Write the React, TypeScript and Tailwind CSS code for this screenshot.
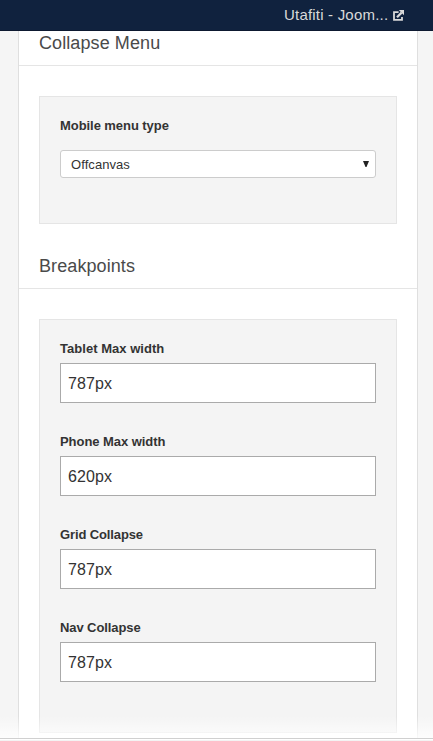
import React from "react";

const fields = [
  { label: "Tablet Max width", value: "787px", tracking: "tracking-[0.03px]" },
  { label: "Phone Max width", value: "620px", tracking: "tracking-[-0.05px]" },
  { label: "Grid Collapse", value: "787px", tracking: "tracking-[-0.12px]" },
  { label: "Nav Collapse", value: "787px", tracking: "tracking-[-0.09px]" },
];

function ExternalIcon() {
  return (
    <svg className="mt-px h-[11px] w-[11px] shrink-0" viewBox="0 0 11 11" fill="none" stroke="#d9d9d9">
      <path d="M5.6 2.2H1v7.6h8V7" strokeWidth="1.8" />
      <path d="M4 7.2 8.6 2.6" strokeWidth="2.2" />
      <path d="M5.8 0H11v5.2Z" fill="#d9d9d9" stroke="none" />
    </svg>
  );
}

function Heading({ children }: { children: React.ReactNode }) {
  return (
    <h2 className="h-[46px] border-b border-[#e5e5e5] pl-5 pt-[11px] text-[18px] leading-[24px] tracking-[0.09px] text-[#4a4a4a]">
      {children}
    </h2>
  );
}

export default function App() {
  return (
    <div className="relative flex h-[741px] w-[433px] flex-col overflow-hidden bg-[#f5f5f5] font-['Liberation_Sans',Arial,sans-serif] text-[#333]">
      <header className="flex h-[31px] shrink-0 items-center gap-[5px] border-b border-[#0d1930] bg-[#10223e] pl-[284px] text-[15px] tracking-[0.2px] text-[#d9d9d9]">
        <span className="whitespace-nowrap">Utafiti - Joom...</span>
        <ExternalIcon />
      </header>
      <main className="mx-[18px] h-[707px] w-[400px] shrink-0 border-x border-[#dfdfdf] bg-white">
        <div className="-mt-[11px] [clip-path:inset(11px_0_0_0)]">
          <Heading>Collapse Menu</Heading>
        </div>
        <section className="mx-5 mt-[30px] h-[128px] border border-[#e5e5e5] bg-[#f4f4f4] px-5 pt-5">
          <div className="text-[13px] font-bold leading-[18px] tracking-[-0.06px]">Mobile menu type</div>
          <div className="mt-[15px] flex h-7 items-center justify-between rounded-[3px] border border-[#ccc] bg-white pl-[10px] pr-[6px] text-[13px]">
            <span className="pt-[2px] tracking-[0.07px]">Offcanvas</span>
            <svg className="h-[6px] w-[6px]" viewBox="0 0 6 6">
              <path d="M0 0h6L3.5 6h-1Z" fill="#222" />
            </svg>
          </div>
        </section>
        <div className="mt-[19px]">
          <Heading>Breakpoints</Heading>
        </div>
        <section className="mx-5 mt-[30px] flex h-[414px] flex-col gap-[30px] border border-[#e5e5e5] bg-[#f4f4f4] px-5 pt-5">
          {fields.map((f) => (
            <label key={f.label} className="block">
              <span className={`block h-[18px] text-[13px] font-bold leading-[18px] ${f.tracking}`}>{f.label}</span>
              <input
                defaultValue={f.value}
                className="mt-[5px] block h-10 w-full border border-[#aaa] bg-white px-[7px] pt-[2px] text-[16px] tracking-[0.1px] text-[#333] outline-none"
              />
            </label>
          ))}
        </section>
      </main>
      <footer className="h-[3px] shrink-0 border-t border-[#d0d0d0] bg-[#f3f3f3]">
        <div className="h-px bg-white" />
      </footer>
      <div className="absolute inset-x-0 top-[716px] h-[22px] bg-linear-to-b from-white/0 to-white/80" />
    </div>
  );
}
